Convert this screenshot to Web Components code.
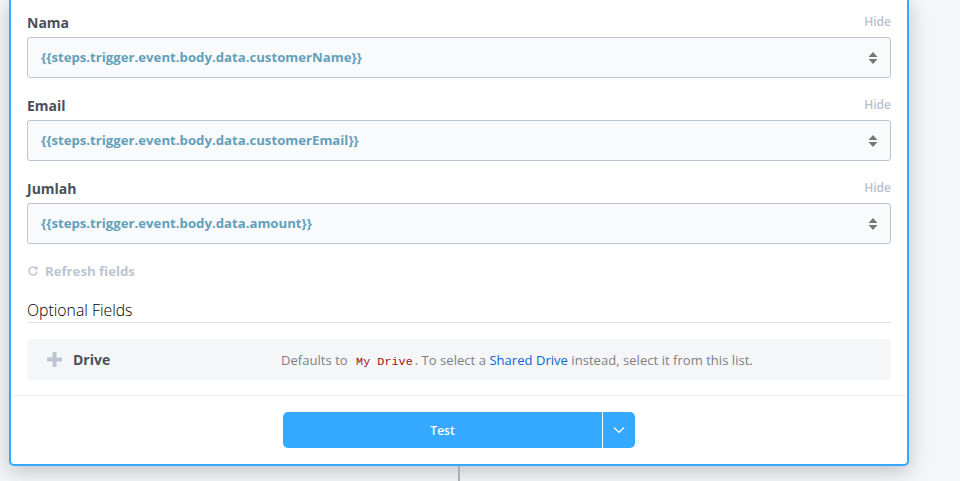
<template id="field-template">
    <style>
        :host { display: block; height: 83px; }
        .top { display: flex; justify-content: space-between; align-items: center; height: 20px; margin-bottom: 5px; }
        .name { font-size: 14px; font-weight: 700; color: #4a4f59; }
        .hide { font-size: 12px; font-weight: 600; color: #b8c0cc; margin-top: -2px; }
        .box { display: flex; align-items: center; justify-content: space-between; box-sizing: border-box; height: 41px; padding: 0 12px 0 13px; border: 1px solid #bcc5d1; border-radius: 3px; background: #f9fafc; }
        .val { font-size: 13.2px; font-weight: 700; color: #62a0ba; margin-top: -2px; }
        svg { display: block; }
    </style>
    <div class="top"><span class="name"></span><span class="hide">Hide</span></div>
    <div class="box">
        <span class="val"><slot></slot></span>
        <svg width="10" height="14" viewBox="0 0 10 14"><path d="M5 1 9.5 6H.5zM5 13 .5 8h9z" fill="#777"/></svg>
    </div>
</template>

<template id="optional-template">
    <style>
        :host { display: flex; align-items: center; box-sizing: border-box; height: 41px; background: #f5f6f8; border-radius: 3px; padding: 0 20px; }
        svg { display: block; margin-right: 11px; }
        .name { width: 208px; font-size: 14px; font-weight: 700; color: #4a4f59; }
        .help { font-size: 13px; color: #7b7f86; letter-spacing: .04px; }
        code { font-family: "Liberation Mono", monospace; font-size: 11.8px; letter-spacing: 0; color: #9b1212; margin: 0 2px 0 5px; }
        a { color: #0a66d0; text-decoration: none; }
    </style>
    <svg width="15" height="15" viewBox="0 0 15 15"><path d="M5.500 0h4v5.500H15v4H9.500V15h-4V9.500H0v-4h5.500z" fill="#bcc5d1"/></svg>
    <span class="name">Drive</span>
    <span class="help">Defaults to <code>My Drive</code>. To select a <a>Shared Drive</a> instead, select it from this list.</span>
</template>

<template id="test-template">
    <style>
        :host { display: flex; width: 352px; height: 36px; color: #fff; font-size: 12px; font-weight: 600; }
        .main { flex: 1; display: flex; align-items: center; justify-content: center; background: #34a9ff; border-radius: 5px 0 0 5px; margin-right: 1px; }
        .more { width: 32px; display: flex; align-items: center; justify-content: center; background: #34a9ff; border-radius: 0 5px 5px 0; }
    </style>
    <div class="main"><slot></slot></div>
    <div class="more"><svg width="12" height="8" viewBox="0 0 12 8"><path d="M1 1.5 6 6.5 11 1.5" fill="none" stroke="#fff" stroke-width="1.2"/></svg></div>
</template>

<template id="card-template">
    <style>
        :host { display: block; box-sizing: border-box; width: 900px; height: 466px; margin-left: 9px; background: #fff; border: 2px solid #34a9ff; border-top: 0; border-radius: 0 0 5px 5px; box-shadow: 0 5px 20px rgba(50, 55, 70, .28); }
        .body { padding: 12px 16px 0; height: 396px; box-sizing: border-box; border-bottom: 1px solid #f0f1f3; }
        .refresh { display: flex; align-items: center; gap: 6px; height: 20px; font-size: 13.2px; font-weight: 700; color: #bcc5d1; }
        h3 { margin: 19px 0 16px; padding-bottom: 2px; font-size: 15.8px; font-weight: 300; line-height: 20px; color: #000; border-bottom: 1px solid #dfe2e7; }
        .foot { display: flex; justify-content: center; padding: 16px 0 0 0; }
    </style>
    <div class="body">
        <slot></slot>
        <div class="refresh">
            <svg width="12" height="12" viewBox="0 0 12 12"><path d="M10 6.5A4 4 0 1 1 8.6 3" fill="none" stroke="#bcc5d1" stroke-width="1.5"/><path d="M10.5 .8v3.7H6.8z" fill="#bcc5d1"/></svg>
            Refresh fields
        </div>
        <h3>Optional Fields</h3>
        <optional-row></optional-row>
    </div>
    <div class="foot"><test-button>Test</test-button></div>
</template>

<body>
    <style>
        html, body { height: 100%; }
        body { margin: 0; overflow: hidden; background: #f5f6f8; font-family: "Open Sans", sans-serif; }
        .wire { width: 2px; height: 15px; margin-left: 458px; background: #a9afba; }
    </style>
    <step-card>
        <prop-field name="Nama">{{steps.trigger.event.body.data.customerName}}</prop-field>
        <prop-field name="Email">{{steps.trigger.event.body.data.customerEmail}}</prop-field>
        <prop-field name="Jumlah">{{steps.trigger.event.body.data.amount}}</prop-field>
    </step-card>
    <div class="wire"></div>

    <script>
        function fromTemplate(el, id) {
            const clone = document.importNode(document.querySelector(id).content, true);
            el.attachShadow({ mode: 'open' }).appendChild(clone);
        }

        customElements.define('prop-field', class extends HTMLElement {
            constructor() {
                super();
                fromTemplate(this, '#field-template');
            }
            connectedCallback() {
                this.shadowRoot.querySelector('.name').textContent = this.getAttribute('name');
            }
        });
        customElements.define('optional-row', class extends HTMLElement {
            constructor() {
                super();
                fromTemplate(this, '#optional-template');
            }
        });
        customElements.define('test-button', class extends HTMLElement {
            constructor() {
                super();
                fromTemplate(this, '#test-template');
            }
        });
        customElements.define('step-card', class extends HTMLElement {
            constructor() {
                super();
                fromTemplate(this, '#card-template');
            }
        });
    </script>
</body>
